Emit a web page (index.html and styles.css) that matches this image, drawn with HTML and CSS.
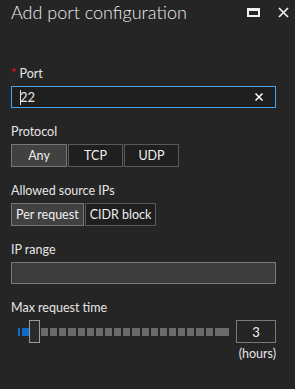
FILE: index.html
```html
<!DOCTYPE html>
<html lang="en">
<head>
  <meta charset="UTF-8" />
  <title>Add port configuration</title>
  <link rel="stylesheet" href="styles.css">
</head>
<body>
  <header class="blade-header">
    <h1>Add port configuration</h1>
    <div class="blade-actions">
      <span class="icon-max"></span>
      <svg class="icon-close" width="11" height="11" viewBox="0 0 11 11">
        <path d="M1 1 L10 10 M10 1 L1 10" stroke="#f2f2f2" stroke-width="1.7" fill="none" />
      </svg>
    </div>
  </header>

  <main class="form">
    <label class="field-label"><span class="required">*</span> Port</label>
    <div class="text-input focused">
      <span class="caret"></span><span class="value">22</span>
      <svg class="clear" width="8" height="8" viewBox="0 0 8 8">
        <path d="M0.5 0.5 L7.5 7.5 M7.5 0.5 L0.5 7.5" stroke="#fff" stroke-width="1.5" fill="none" />
      </svg>
    </div>

    <label class="field-label">Protocol</label>
    <div class="toggle-group fixed">
      <button class="selected">Any</button>
      <button>TCP</button>
      <button>UDP</button>
    </div>

    <label class="field-label">Allowed source IPs</label>
    <div class="toggle-group">
      <button class="selected">Per request</button>
      <button>CIDR block</button>
    </div>

    <label class="field-label">IP range</label>
    <div class="text-input disabled"></div>

    <label class="field-label">Max request time</label>
    <div class="slider-row">
      <div class="slider">
        <span class="fill thin"></span>
        <span class="fill"></span>
        <span class="thumb"></span>
        <div class="steps" id="steps"></div>
      </div>
      <div class="number-box">3</div>
    </div>
    <div class="unit">(hours)</div>
  </main>

  <script>
    const steps = document.getElementById('steps');
    for (let i = 0; i < 20; i++) {
      const s = document.createElement('span');
      if (i === 19) s.className = 'wide';
      steps.appendChild(s);
    }
  </script>
</body>
</html>
```

FILE: styles.css
```css
* {
  box-sizing: border-box;
  margin: 0;
  padding: 0;
}

html, body {
  background: #252525;
  color: #e6e6e6;
  font-family: Lato, "Open Sans", sans-serif;
  font-size: 12.5px;
}

.blade-header {
  display: flex;
  justify-content: space-between;
  align-items: flex-start;
  height: 26px;
  padding: 0 6px 0 11px;
}

.blade-header h1 {
  font-size: 18px;
  font-weight: 300;
  line-height: 24px;
  color: #ececec;
}

.blade-actions {
  display: flex;
  align-items: center;
  gap: 18px;
  padding-top: 7px;
}

.icon-max {
  width: 13px;
  height: 9px;
  border: 2px solid #f2f2f2;
  border-top-width: 3px;
}

.icon-close {
  display: block;
}

.form {
  padding: 40px 19px 0 11px;
}

.field-label {
  display: block;
  line-height: 16px;
  margin-bottom: 4px;
}

.required {
  color: #e81123;
}

.text-input {
  position: relative;
  display: flex;
  align-items: center;
  height: 22px;
  padding: 0 8px;
  margin-bottom: 16px;
  border: 1px solid #7a7a7a;
}

.text-input.focused {
  border-color: #4aa3e6;
  background: #1e1e1e;
}

.text-input.disabled {
  background: #3c3c3c;
}

.caret {
  width: 1px;
  height: 15px;
  background: #e6e6e6;
}

.value {
  flex: 1;
  margin-left: -1px;
  font-size: 13px;
}

.clear {
  margin-right: 4px;
}

.toggle-group {
  display: flex;
  margin-bottom: 16px;
}

.toggle-group button {
  font: inherit;
  color: #f0f0f0;
  background: #1f1f1f;
  border: 1px solid #5a5a5a;
  height: 23px;
  padding: 0 4px;
  margin-right: 1px;
}

.toggle-group.fixed button {
  width: 55px;
}

.toggle-group.fixed button:first-child {
  width: 56px;
}

.toggle-group button.selected {
  background: #414141;
  border-color: #777;
}

.slider-row {
  display: flex;
  align-items: center;
  gap: 7px;
}

.slider {
  display: flex;
  align-items: center;
  flex: 1;
  padding-left: 7px;
}

.fill {
  width: 7px;
  height: 8px;
  background: #0f6cc2;
}

.fill.thin {
  width: 2px;
  margin-right: 2px;
}

.thumb {
  width: 11px;
  height: 23px;
  border: 1px solid #9a9a9a;
  background: #2a2a2a;
  margin-right: 1px;
}

.steps {
  display: flex;
  flex: 1;
  gap: 2px;
}

.steps span {
  flex: 1;
  height: 8px;
  background: #6b6b6b;
}

.steps span.wide {
  flex: 2;
}

.number-box {
  width: 40px;
  height: 23px;
  border: 1px solid #7a7a7a;
  display: flex;
  align-items: center;
  justify-content: center;
  color: #f2f2f2;
  font-size: 13px;
}

.unit {
  text-align: right;
  margin-top: 3px;
  line-height: 16px;
}
```
